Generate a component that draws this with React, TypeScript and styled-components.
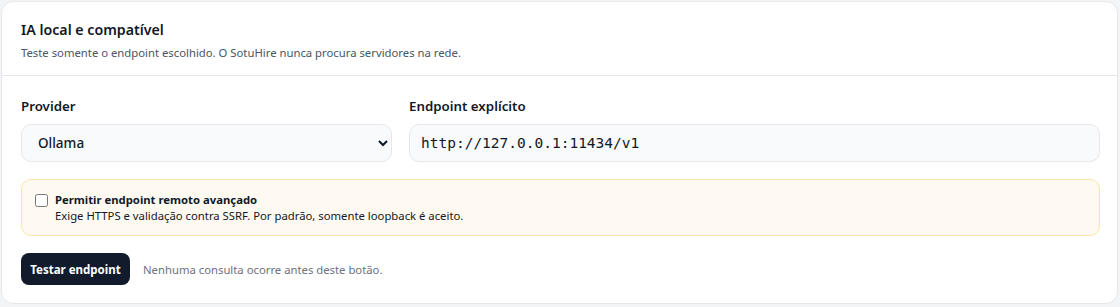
import React from "react";
import styled, { createGlobalStyle } from "styled-components";

const Global = createGlobalStyle`
  html, body { margin: 0; padding: 0; background: #f3f4f6; }
  body { font-family: "Noto Sans", "Open Sans", sans-serif; color: #111827; }
  #root { padding: 1px 2px 2px 1px; }
  * { box-sizing: border-box; }
`;

const Card = styled.section`
  background: #ffffff;
  border: 1px solid #e5e7eb;
  border-radius: 12px;
  height: 303px;
  display: flex;
  flex-direction: column;
  overflow: hidden;
`;

const Header = styled.header`
  padding: 17px 17px 14px 19px;
  border-bottom: 1px solid #e5e7eb;
`;

const Title = styled.h2`
  margin: 0;
  font-size: 14.2px;
  font-weight: 600;
  line-height: 22px;
  color: #111827;
`;

const Subtitle = styled.p`
  margin: 4px 0 0;
  font-size: 11.3px;
  line-height: 16px;
  color: #4b5563;
`;

const Body = styled.div`
  padding: 20px 17px 18px 19px;
  display: flex;
  flex-direction: column;
  gap: 17px;
`;

const Fields = styled.div`
  display: grid;
  grid-template-columns: 371px 1fr;
  gap: 17px;
`;

const Field = styled.label`
  display: flex;
  flex-direction: column;
  gap: 8px;
`;

const Label = styled.span`
  font-size: 13.3px;
  font-weight: 600;
  line-height: 20px;
  color: #111827;
`;

const controlBase = `
  height: 38px;
  border: 1px solid #e5e7eb;
  border-radius: 10px;
  background: #f8fafc;
  color: #111827;
  width: 100%;
  outline: none;
`;

const Select = styled.select`
  ${controlBase}
  font-family: "Noto Sans", sans-serif;
  font-size: 13.5px;
  font-weight: 500;
  padding: 0 8px 0 12px;
`;

const Input = styled.input`
  ${controlBase}
  font-family: "DejaVu Sans Mono", monospace;
  font-size: 14.5px;
  padding: 0 11px;
`;

const Notice = styled.div`
  display: flex;
  align-items: flex-start;
  gap: 7px;
  padding: 12px 13px;
  height: 57px;
  background: #fefaf1;
  border: 1px solid #fde3a7;
  border-radius: 10px;
`;

const Check = styled.input`
  margin: 2px 0 0;
  width: 13px;
  height: 13px;
  flex: none;
`;

const NoticeText = styled.div`
  display: flex;
  flex-direction: column;
  font-size: 11.3px;
  line-height: 16px;
  color: #111827;
`;

const Strong = styled.span`
  font-weight: 700;
`;

const Actions = styled.div`
  display: flex;
  align-items: center;
  gap: 13px;
`;

const Button = styled.button`
  height: 32px;
  width: 109px;
  padding: 0;
  border: none;
  border-radius: 8px;
  background: #111b2b;
  color: #ffffff;
  font-family: "Noto Sans", sans-serif;
  font-size: 11.5px;
  font-weight: 700;
`;

const Hint = styled.span`
  font-size: 11.3px;
  color: #6b7280;
`;

export default function App() {
  return (
    <>
      <Global />
      <Card>
        <Header>
          <Title>IA local e compatível</Title>
          <Subtitle>Teste somente o endpoint escolhido. O SotuHire nunca procura servidores na rede.</Subtitle>
        </Header>
        <Body>
          <Fields>
            <Field>
              <Label>Provider</Label>
              <Select defaultValue="ollama">
                <option value="ollama">Ollama</option>
              </Select>
            </Field>
            <Field>
              <Label>Endpoint explícito</Label>
              <Input defaultValue="http://127.0.0.1:11434/v1" />
            </Field>
          </Fields>
          <Notice>
            <Check type="checkbox" />
            <NoticeText>
              <Strong>Permitir endpoint remoto avançado</Strong>
              <span>Exige HTTPS e validação contra SSRF. Por padrão, somente loopback é aceito.</span>
            </NoticeText>
          </Notice>
          <Actions>
            <Button>Testar endpoint</Button>
            <Hint>Nenhuma consulta ocorre antes deste botão.</Hint>
          </Actions>
        </Body>
      </Card>
    </>
  );
}
